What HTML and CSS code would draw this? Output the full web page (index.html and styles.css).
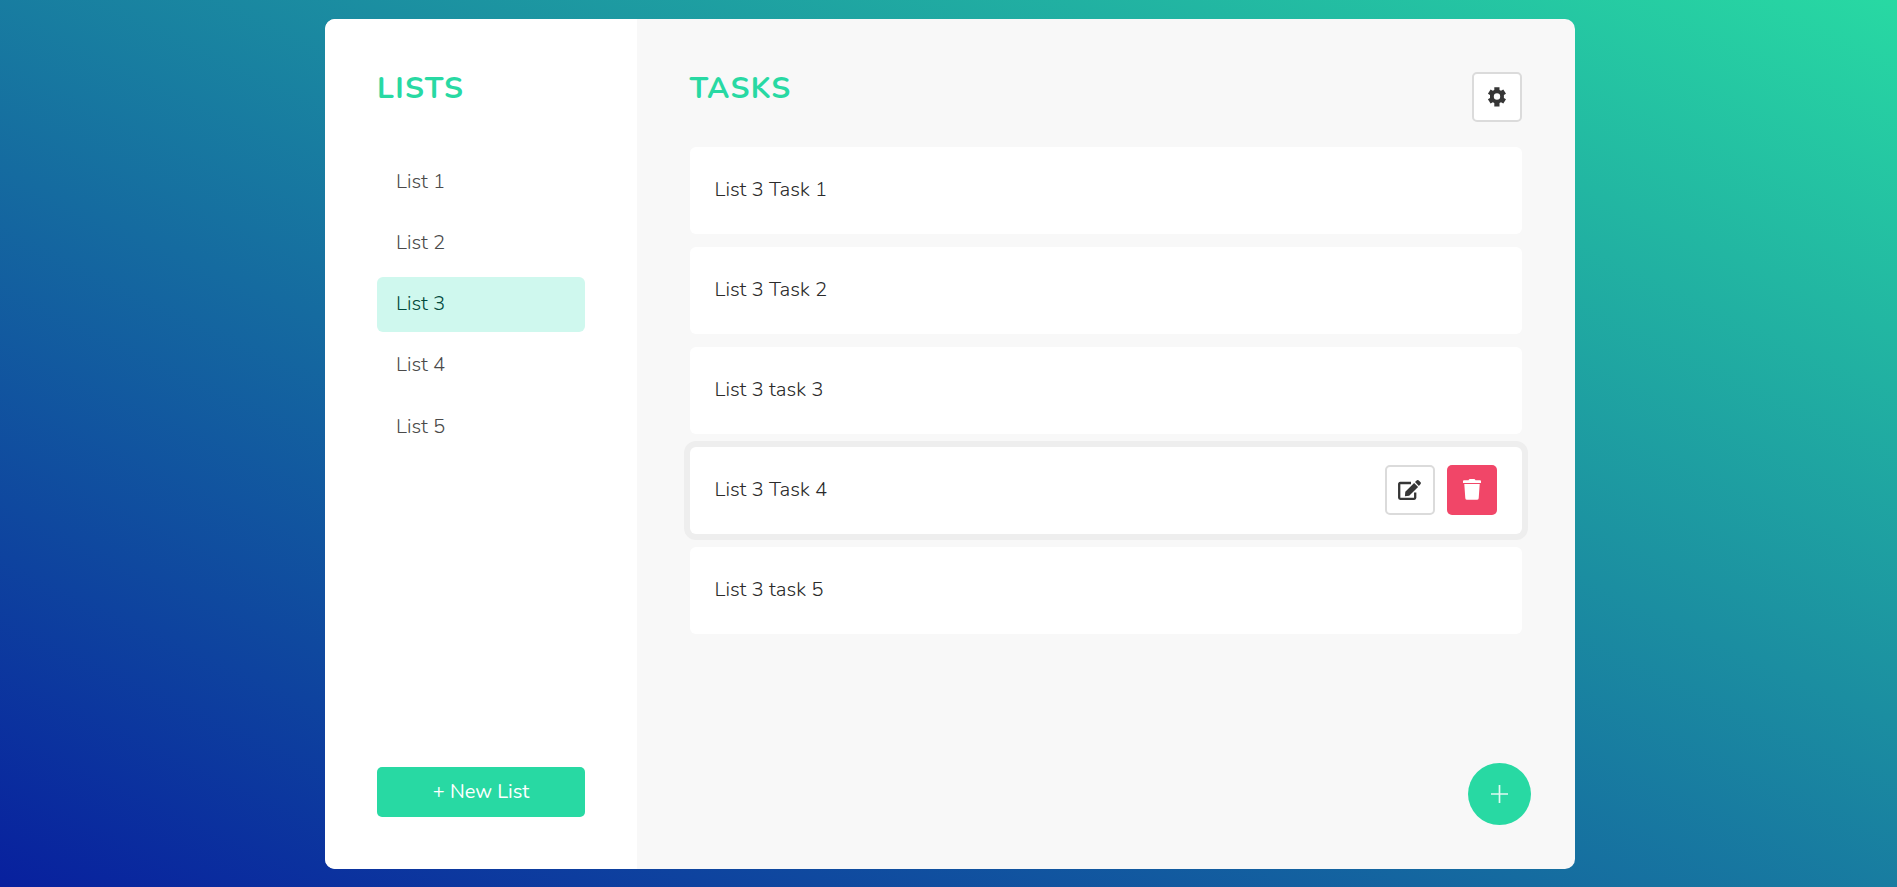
FILE: index.html
```html
<!DOCTYPE html>
<html lang="en">
<head>
<meta charset="utf-8">
<title>Tasks</title>
<link rel="stylesheet" href="styles.css">
</head>
<body>
<div class="app">
  <aside class="sidebar">
    <h1 class="title">LISTS</h1>
    <ul class="lists">
      <li class="list-item">List 1</li>
      <li class="list-item">List 2</li>
      <li class="list-item active">List 3</li>
      <li class="list-item">List 4</li>
      <li class="list-item">List 5</li>
    </ul>
    <button class="new-list">+ New List</button>
  </aside>
  <main class="content">
    <header class="header">
      <h1 class="title">TASKS</h1>
      <button class="btn" aria-label="Settings">
        <svg width="20" height="20" viewBox="0 0 20 20"><path fill="#363636" fill-rule="evenodd" d="M7.300 .3h5.200v2.700l1.500.8 2.300-1.200 2.700 4.200-2.100 1.300v2.800l2.100 1.300-2.700 4.300-2.300-1.200-1.500.8v3.500H7.300v-3.500l-1.500-.8-2.200 1.200-2.700-4.300 2.100-1.300V8.100L.9 6.800l2.700-4.200 2.200 1.200 1.500-.8zM10 6.300a3.200 3.200 0 1 0 0 6.400 3.200 3.200 0 0 0 0-6.400z"/></svg>
      </button>
    </header>
    <ul class="tasks">
      <li class="task"><span class="label">List 3 Task 1</span></li>
      <li class="task"><span class="label">List 3 Task 2</span></li>
      <li class="task"><span class="label">List 3 task 3</span></li>
      <li class="task hovered"><span class="label">List 3 Task 4</span>
        <div class="actions">
          <button class="btn" aria-label="Edit">
            <svg width="24" height="22" viewBox="0 0 24 22"><path d="M13 4H2.200Q1.200 4 1.200 5V18.800Q1.200 19.800 2.200 19.800H16.200Q17.200 19.800 17.200 18.800V13.500" fill="none" stroke="#363636" stroke-width="2.300"/><path fill="#363636" d="M6.900 17.200l.4-4.500L16.100 4l4 4-8.900 8.800zM17 3.100l1.900-1.800q.8-.7 1.600 0l2.100 2q.8.800 0 1.600L20.900 6.900z"/></svg>
          </button>
          <button class="btn danger" aria-label="Delete">
            <svg width="20" height="22" viewBox="0 0 20 22"><path fill="#fff" d="M1 2.100Q1 1.200 2 1.200H6.500Q7 0 8 0h4q1 0 1.500 1.200H18q1 0 1 .9V4H1zM2.300 5H17.700L16.700 19.200Q16.500 20.700 15 20.700H5Q3.500 20.700 3.300 19.200z"/></svg>
          </button>
        </div>
      </li>
      <li class="task"><span class="label">List 3 task 5</span></li>
    </ul>
    <button class="fab" aria-label="Add task">
      <svg width="18" height="18" viewBox="0 0 18 18"><path d="M0 9h17M8.500 0v18" stroke="#fff" stroke-opacity=".85" stroke-width="1.700"/></svg>
    </button>
  </main>
</div>
</body>
</html>
```
FILE: styles.css
```css
* { box-sizing: border-box; }
body {
  margin: 0;
  height: 887px;
  overflow: hidden;
  display: flex;
  justify-content: center;
  padding: 19px 0 18px 3px;
  background: linear-gradient(to top right, #08209e, #28d9a3);
  font-family: Nunito, Lato, sans-serif;
  font-size: 20px;
  color: #4a4a4a;
}
button { font: inherit; padding: 0; border: 0; display: flex; align-items: center; justify-content: center; }
ul { list-style: none; margin: 0; padding: 0; }
.app { width: 1250px; height: 850px; display: flex; border-radius: 10px; overflow: hidden; background: #f8f8f8; }
.sidebar { width: 312px; padding: 52px; background: #fff; display: flex; flex-direction: column; }
.title { margin: 0; height: 34px; font-size: 30px; line-height: 36px; font-weight: 700; color: #28d9a3; letter-spacing: 1.300px; }
.lists { margin-top: 49.600px; display: flex; flex-direction: column; gap: 6.300px; flex: 1; font-size: 20.400px; font-weight: 300; }
.list-item { height: 55px; line-height: 53px; padding-left: 19px; border-radius: 6px; color: #4a4a4a; }
.active { background: #cff8ee; color: #00483b; }
.new-list { height: 50px; padding-bottom: 2px; border-radius: 5px; background: #28d9a3; color: #fff; }
.content { flex: 1; padding: 53px 53px 0; position: relative; }
.header { display: flex; justify-content: space-between; height: 75px; }
.header .title { margin: -1px 0 0 -.500px; }
.btn { width: 50px; height: 50px; border: 2px solid #dbdbdb; border-radius: 5px; background: #fff; }
.danger { background: #f14668; border: 0; }
.tasks { display: flex; flex-direction: column; gap: 13px; font-size: 20.400px; font-weight: 300; color: #2a2a2a; }
.task { height: 87px; padding: 0 25px 1px 24.500px; display: flex; align-items: center; justify-content: space-between; background: #fff; border-radius: 6px; }
.label { padding-bottom: 2px; }
.hovered { box-shadow: 0 0 0 6px #eee; }
.actions { display: flex; gap: 12px; }
.fab { position: absolute; right: 44px; bottom: 44px; width: 63px; height: 62px; border-radius: 50%; background: #28d9a3; }
```
